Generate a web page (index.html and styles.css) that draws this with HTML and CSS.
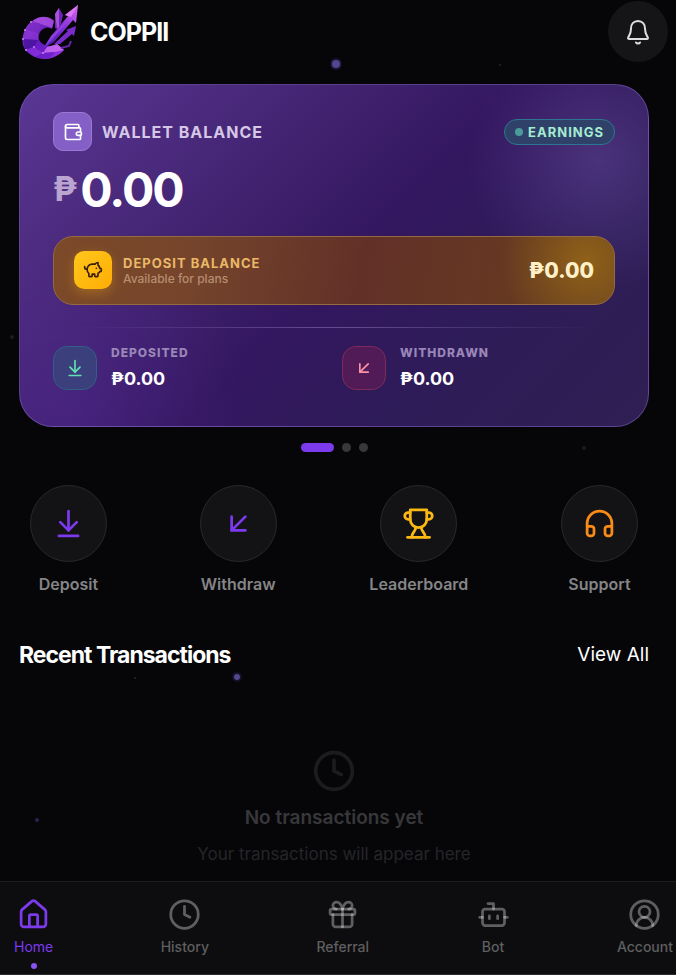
FILE: index.html
```html
<!DOCTYPE html>
<html lang="en">
<head>
  <meta charset="UTF-8">
  <meta name="viewport" content="width=device-width, initial-scale=1.0">
  <title>COPPII</title>
  <link rel="stylesheet" href="styles.css">
</head>
<body>

  <!-- floating particles -->
  <svg class="particles" aria-hidden="true">
    <circle cx="336" cy="64" r="6" fill="#7c5cff" opacity=".16"/>
    <circle cx="336" cy="64" r="4" fill="#544590"/>
    <circle cx="237" cy="677" r="5" fill="#7c5cff" opacity=".12"/>
    <circle cx="237" cy="677" r="3" fill="#54478c"/>
    <circle cx="37" cy="820" r="2" fill="#2c2450"/>
    <circle cx="12" cy="337" r="2" fill="#1c1c22"/>
    <circle cx="584" cy="448" r="2" fill="#1a1a20"/>
    <circle cx="500" cy="65" r="1" fill="#24242c"/>
    <circle cx="135" cy="678" r="1" fill="#24242c"/>
  </svg>

  <header class="header">
    <a class="brand" href="#">
      <svg class="brand-logo" viewBox="0 0 58 56" aria-hidden="true">
        <defs>
          <linearGradient id="ring" x1="0" y1="0" x2="1" y2="1">
            <stop offset="0" stop-color="#a445dc"/>
            <stop offset=".5" stop-color="#5c1ab4"/>
            <stop offset="1" stop-color="#a23ae8"/>
          </linearGradient>
          <linearGradient id="arrow" x1="1" y1="0" x2="0" y2="1">
            <stop offset="0" stop-color="#d768f2"/>
            <stop offset=".45" stop-color="#8430d8"/>
            <stop offset="1" stop-color="#3a12a8"/>
          </linearGradient>
        </defs>
        <path d="M33 17C27 11 17 12 10 18C5 22 3 27 2 32C0 41 4 48 12 52C21 57 34 56 43 46L36 40C31 43 26 43 21 40C16 36 17 28 22 25C25 23 28 23 31 25Z" fill="url(#ring)"/>
        <path d="M33 17C27 11 17 12 12 17L20 20L31 24Z" fill="#b052e4" opacity=".75"/>
        <path d="M10 18 20 20 17 29 6 26Z" fill="#7a2bc4" opacity=".8"/>
        <path d="M6 26 17 29 17 36 2 35Z" fill="#8d35d6" opacity=".7"/>
        <path d="M2 35 17 36 13 43 4 46Z" fill="#41109a" opacity=".7"/>
        <path d="M17 36 26 43 22 49 13 43Z" fill="#6a1cc8" opacity=".8"/>
        <path d="M4 46 13 43 22 49 14 53Z" fill="#8a2fdd" opacity=".8"/>
        <path d="M22 49 26 43 36 40 43 46 34 48Z" fill="#d070f6" opacity=".8"/>
        <path d="M14 53 22 49 34 48 28 55Z" fill="#6a1fca" opacity=".8"/>
        <path d="M34 10 38 4 42 11 40 20 37 26 34 24Z" fill="#6d23b4"/>
        <path d="M38 4 38 24 36 24 34 10Z" fill="#a653d8"/>
        <path d="M22 45 30 32 47 12 44 11 57 1 55 19 52 16 33 38Z" fill="url(#arrow)"/>
        <path d="M44 11 57 1 50 13Z" fill="#dc78f2"/>
        <path d="M22 45 30 32 50 13 30 37Z" fill="#a04ae6" opacity=".7"/>
        <path d="M33 40 47 27 45 26 55 22 53 32 51 30 39 40Z" fill="#7a2ccb"/>
        <path d="M40 44 48 42 50 37" fill="none" stroke="#6426a4" stroke-width="2"/>
        <g fill="#c884f0">
          <circle cx="4" cy="26" r="1"/><circle cx="2" cy="35" r="1"/><circle cx="5" cy="46" r="1"/>
          <circle cx="13" cy="43" r="1"/><circle cx="22" cy="49" r="1"/><circle cx="10" cy="18" r="1"/>
        </g>
      </svg>
      <span class="brand-name">COPPII</span>
    </a>
    <button class="bell" type="button" aria-label="Notifications">
      <svg viewBox="0 0 28 28" width="28" height="28">
        <path d="M14 3C9.500 3 7 6.400 7 10.500C7 15.500 5.800 16.600 4.300 19.200C3.700 20.300 4.100 21 5.300 21H22.700C23.900 21 24.300 20.300 23.700 19.200C22.200 16.600 21 15.500 21 10.500C21 6.400 18.500 3 14 3Z"/>
        <path d="M12 24.500C12.700 25.800 15.300 25.800 16 24.500"/>
      </svg>
    </button>
  </header>

  <main class="content">
    <section class="wallet">
      <div class="wallet-top">
        <div class="wallet-title">
          <span class="wallet-icon">
            <svg class="icon" viewBox="0 0 24 24" width="20" height="20"><path d="M19 7V4a1 1 0 0 0-1-1H5a2 2 0 0 0 0 4h15a1 1 0 0 1 1 1v4h-3a2 2 0 0 0 0 4h3a1 1 0 0 0 1-1v-2a1 1 0 0 0-1-1"/><path d="M3 5v14a2 2 0 0 0 2 2h15a1 1 0 0 0 1-1v-4"/></svg>
          </span>
          <h2>WALLET BALANCE</h2>
        </div>
        <span class="badge">EARNINGS</span>
      </div>

      <p class="amount"><span class="currency">₱</span>0.00</p>

      <div class="deposit">
        <span class="deposit-icon">
          <svg class="icon" viewBox="0 0 24 24" width="20" height="20"><path d="M11 17h3v2a1 1 0 0 0 1 1h2a1 1 0 0 0 1-1v-3a3.160 3.160 0 0 0 2-2h1a1 1 0 0 0 1-1v-2a1 1 0 0 0-1-1h-1a5 5 0 0 0-2-4V3a4 4 0 0 0-3.200 1.600l-.3.4H11a6 6 0 0 0-6 6v1a5 5 0 0 0 2 4v3a1 1 0 0 0 1 1h2a1 1 0 0 0 1-1z"/><path d="M16 10h.01"/><path d="M2 8v1a2 2 0 0 0 2 2h1"/></svg>
        </span>
        <div class="deposit-text">
          <h3>DEPOSIT BALANCE</h3>
          <p>Available for plans</p>
        </div>
        <strong class="deposit-amount">₱0.00</strong>
      </div>

      <div class="divider"></div>

      <div class="stats">
        <div class="stat">
          <span class="stat-icon in">
            <svg class="icon" viewBox="0 0 24 24" width="20" height="20"><path d="M12 17V3"/><path d="m6 11 6 6 6-6"/><path d="M19 21H5"/></svg>
          </span>
          <div>
            <h3>DEPOSITED</h3>
            <p>₱0.00</p>
          </div>
        </div>
        <div class="stat">
          <span class="stat-icon out">
            <svg class="icon" viewBox="0 0 24 24" width="20" height="20"><path d="M17 7 7 17"/><path d="M17 17H7V7"/></svg>
          </span>
          <div>
            <h3>WITHDRAWN</h3>
            <p>₱0.00</p>
          </div>
        </div>
      </div>
    </section>

    <div class="dots">
      <button class="active" type="button" aria-label="Slide 1"></button>
      <button type="button" aria-label="Slide 2"></button>
      <button type="button" aria-label="Slide 3"></button>
    </div>

    <div class="actions">
      <a class="action purple" href="#">
        <span class="action-icon"><svg class="icon" viewBox="0 0 24 24" width="33" height="33"><path d="M12 17V3"/><path d="m6 11 6 6 6-6"/><path d="M19 21H5"/></svg></span>
        Deposit
      </a>
      <a class="action purple" href="#">
        <span class="action-icon"><svg class="icon" viewBox="0 0 24 24" width="33" height="33"><path d="M17 7 7 17"/><path d="M17 17H7V7"/></svg></span>
        Withdraw
      </a>
      <a class="action yellow" href="#">
        <span class="action-icon"><svg class="icon" viewBox="0 0 24 24" width="33" height="33"><path d="M6 9H4.500a2.500 2.500 0 0 1 0-5H6"/><path d="M18 9h1.500a2.500 2.500 0 0 0 0-5H18"/><path d="M4 22h16"/><path d="M10 14.660C10 18 7 18.500 7 22"/><path d="M14 14.660C14 18 17 18.500 17 22"/><path d="M18 2H6v7a6 6 0 0 0 12 0V2Z"/></svg></span>
        Leaderboard
      </a>
      <a class="action orange" href="#">
        <span class="action-icon"><svg class="icon" viewBox="0 0 24 24" width="33" height="33"><path d="M3 14h3a2 2 0 0 1 2 2v3a2 2 0 0 1-2 2H5a2 2 0 0 1-2-2v-7a9 9 0 0 1 18 0v7a2 2 0 0 1-2 2h-1a2 2 0 0 1-2-2v-3a2 2 0 0 1 2-2h3"/></svg></span>
        Support
      </a>
    </div>

    <section class="recent">
      <div class="recent-head">
        <h2>Recent Transactions</h2>
        <a href="#">View All</a>
      </div>
      <div class="empty">
        <svg class="icon" viewBox="0 0 24 24" width="44" height="44"><circle cx="12" cy="12" r="10"/><path d="M12 6v6l4 2"/></svg>
        <h3>No transactions yet</h3>
        <p>Your transactions will appear here</p>
      </div>
    </section>
  </main>

  <nav class="nav">
    <a class="nav-item active" href="#">
      <svg class="icon" viewBox="0 0 24 24" width="33" height="33"><path d="M15 21v-8a1 1 0 0 0-1-1h-4a1 1 0 0 0-1 1v8"/><path d="M3 10a2 2 0 0 1 .709-1.528l7-5.999a2 2 0 0 1 2.582 0l7 5.999A2 2 0 0 1 21 10v9a2 2 0 0 1-2 2H5a2 2 0 0 1-2-2z"/></svg>
      Home
    </a>
    <a class="nav-item" href="#">
      <svg class="icon" viewBox="0 0 24 24" width="33" height="33"><circle cx="12" cy="12" r="10"/><path d="M12 6v6l4 2"/></svg>
      History
    </a>
    <a class="nav-item" href="#">
      <svg class="icon" viewBox="0 0 24 24" width="33" height="33"><rect x="3" y="8" width="18" height="4" rx="1"/><path d="M12 8v13"/><path d="M19 12v7a2 2 0 0 1-2 2H7a2 2 0 0 1-2-2v-7"/><path d="M7.500 8a2.500 2.500 0 0 1 0-5A4.800 8 0 0 1 12 8a4.800 8 0 0 1 4.500-5 2.500 2.500 0 0 1 0 5"/></svg>
      Referral
    </a>
    <a class="nav-item" href="#">
      <svg class="icon" viewBox="0 0 24 24" width="33" height="33"><path d="M12 8V4H8"/><rect x="4" y="8" width="16" height="12" rx="2"/><path d="M2 14h2"/><path d="M20 14h2"/><path d="M15 13v2"/><path d="M9 13v2"/></svg>
      Bot
    </a>
    <a class="nav-item" href="#">
      <svg class="icon" viewBox="0 0 24 24" width="33" height="33"><path d="M18 20a6 6 0 0 0-12 0"/><circle cx="12" cy="10" r="4"/><circle cx="12" cy="12" r="10"/></svg>
      Account
    </a>
  </nav>

</body>
</html>
```
FILE: styles.css
```css
* {
  box-sizing: border-box;
  margin: 0;
  padding: 0;
}

body {
  font-family: Inter, "Noto Sans", sans-serif;
  background: #060609;
  color: #fff;
  min-height: 100vh;
  display: flex;
  flex-direction: column;
}

a {
  color: inherit;
  text-decoration: none;
}

button {
  border: none;
  cursor: pointer;
}

.icon {
  display: block;
  fill: none;
  stroke: currentColor;
  stroke-width: 2;
  stroke-linecap: round;
  stroke-linejoin: round;
}

.particles {
  position: absolute;
  top: 0;
  left: 0;
  width: 100%;
  height: 100%;
  z-index: -1;
}

/* header */
.header {
  display: flex;
  justify-content: space-between;
  align-items: center;
  padding: 1px 8px 0 21px;
}

.brand {
  display: flex;
  align-items: center;
  gap: 11px;
}

.brand-logo {
  width: 58px;
  height: 56px;
}

.brand-name {
  font-size: 25px;
  font-weight: 700;
  letter-spacing: -1px;
}

.bell {
  display: flex;
  align-items: center;
  justify-content: center;
  width: 60px;
  height: 61px;
  border-radius: 50%;
  background: #151517;
}

.bell svg {
  fill: none;
  stroke: #dededf;
  stroke-width: 2;
  stroke-linecap: round;
}

.content {
  flex: 1;
  padding: 22px 27px 0 19px;
}

/* wallet card */
.wallet {
  padding: 27px 33px 36px;
  border: 1px solid rgba(150, 120, 220, 0.4);
  border-radius: 34px;
  background:
    radial-gradient(circle at 92% 22%, rgba(130, 100, 190, 0.32), transparent 130px),
    radial-gradient(circle at 8% 96%, rgba(100, 50, 180, 0.25), transparent 180px),
    linear-gradient(135deg, #5a3795 0%, #482879 25%, #33175f 52%, #2e1c58 75%, #2f1f52 100%);
}

.wallet-top {
  display: flex;
  justify-content: space-between;
  align-items: center;
}

.wallet-title {
  display: flex;
  align-items: center;
  gap: 10px;
}

.wallet-icon {
  display: flex;
  align-items: center;
  justify-content: center;
  width: 39px;
  height: 39px;
  border: 1px solid #9a79d2;
  border-radius: 10px;
  background: #8460c6;
}

.wallet-title h2 {
  font-size: 16px;
  font-weight: 700;
  line-height: 20px;
  letter-spacing: 1px;
  color: #d5c8e6;
}

.badge {
  display: flex;
  align-items: center;
  gap: 5px;
  height: 26px;
  padding: 0 10px;
  border: 1px solid #2b7790;
  border-radius: 13px;
  background: #2f4169;
  color: #a5ebd2;
  font-size: 13px;
  font-weight: 700;
  letter-spacing: 1px;
}

.badge::before {
  content: "";
  width: 8px;
  height: 8px;
  border-radius: 50%;
  background: #4b9b9b;
}

.amount {
  display: flex;
  align-items: flex-start;
  gap: 5px;
  margin: 10px 0 17px;
  font-size: 48px;
  font-weight: 700;
  line-height: 58px;
  letter-spacing: -2px;
}

.currency {
  font-size: 34px;
  line-height: 56px;
  color: #b9a5cf;
}

.deposit {
  display: flex;
  align-items: center;
  gap: 11px;
  height: 69px;
  padding: 0 20px 1px;
  border: 1px solid #96693f;
  border-radius: 20px;
  background:
    radial-gradient(circle at 95% 35%, rgba(170, 120, 20, 0.6), transparent 85px),
    linear-gradient(100deg, #7c4a28 0%, #75442b 25%, #633028 55%, #653822 80%, #68401f 100%);
}

.deposit-icon {
  display: flex;
  align-items: center;
  justify-content: center;
  width: 38px;
  height: 38px;
  border-radius: 10px;
  background: linear-gradient(135deg, #ffc71c, #ffad05);
  box-shadow: 0 4px 12px rgba(255, 180, 20, 0.3);
  color: #3d1f04;
}

.deposit-text {
  flex: 1;
}

.deposit-text h3 {
  font-size: 13px;
  font-weight: 700;
  line-height: 16px;
  letter-spacing: 1px;
  color: #e9b967;
}

.deposit-text p {
  font-size: 12px;
  font-weight: 500;
  line-height: 15px;
  color: #b78d70;
}

.deposit-amount {
  font-size: 21px;
  font-weight: 800;
  color: #fff0c8;
}

.divider {
  height: 1px;
  margin: 22px 0 18px;
  background: linear-gradient(90deg, transparent 4%, rgba(180, 160, 220, 0.4) 50%, transparent 96%);
}

.stats {
  display: grid;
  grid-template-columns: 1fr 1fr;
  gap: 16px;
}

.stat {
  display: flex;
  align-items: center;
  gap: 14px;
}

.stat-icon {
  display: flex;
  align-items: center;
  justify-content: center;
  width: 44px;
  height: 44px;
  border: 1px solid;
  border-radius: 14px;
}

.stat-icon.in {
  background: #3b3f7c;
  border-color: #2f6088;
}

.stat-icon.in svg {
  color: #62dfb4;
}

.stat-icon.out {
  background: #511b58;
  border-color: #7d2a58;
}

.stat-icon.out svg {
  color: #fb93a4;
}

.stat h3 {
  font-size: 12px;
  font-weight: 800;
  line-height: 14px;
  letter-spacing: 1px;
  color: #9a86b8;
}

.stat p {
  margin-top: 8px;
  font-size: 18px;
  font-weight: 700;
  line-height: 22px;
}

.dots {
  display: flex;
  justify-content: center;
  gap: 8px;
  margin-top: 16px;
}

.dots button {
  width: 9px;
  height: 9px;
  border-radius: 5px;
  background: #38383b;
}

.dots .active {
  width: 33px;
  background: #7c3aed;
}

/* quick actions */
.actions {
  display: flex;
  justify-content: space-between;
  margin-top: 33px;
  padding: 0 11px;
}

.action {
  display: flex;
  flex-direction: column;
  align-items: center;
  gap: 12px;
  font-size: 16px;
  font-weight: 600;
  line-height: 20px;
  color: #858587;
}

.action-icon {
  display: flex;
  align-items: center;
  justify-content: center;
  width: 77px;
  height: 77px;
  border: 1px solid #29292b;
  border-radius: 50%;
  background: #131315;
}

.purple svg {
  color: #7c3aed;
}

.yellow svg {
  color: #fbb913;
}

.orange svg {
  color: #f98b16;
}

/* transactions */
.recent {
  margin-top: 46px;
}

.recent-head {
  display: flex;
  justify-content: space-between;
  align-items: center;
}

.recent-head h2 {
  font-size: 23px;
  font-weight: 700;
  line-height: 30px;
  letter-spacing: -1px;
}

.recent-head a {
  font-size: 19px;
  line-height: 24px;
}

.empty {
  display: flex;
  flex-direction: column;
  align-items: center;
  padding: 79px 0 16px;
}

.empty svg {
  color: #1c1c1f;
}

.empty h3 {
  margin-top: 13px;
  font-size: 19px;
  font-weight: 600;
  line-height: 24px;
  color: #38383b;
}

.empty p {
  margin-top: 14px;
  font-size: 17px;
  line-height: 20px;
  color: #252528;
}

/* bottom nav */
.nav {
  position: sticky;
  bottom: 0;
  display: flex;
  justify-content: space-between;
  height: 94px;
  padding: 16px 3px 0 14px;
  background: #0d0d0f;
  border-top: 1px solid #1e1e21;
  border-bottom: 1px solid #2b2b2e;
}

.nav-item {
  position: relative;
  display: flex;
  flex-direction: column;
  align-items: center;
  gap: 7px;
  font-size: 14px;
  font-weight: 500;
  line-height: 18px;
  color: rgba(255, 255, 255, 0.34);
}

.nav-item.active {
  font-weight: 400;
  color: #7c3aed;
}

.nav-item.active::after {
  content: "";
  position: absolute;
  bottom: 5px;
  width: 6px;
  height: 6px;
  border-radius: 50%;
  background: #8a52ee;
}
```
